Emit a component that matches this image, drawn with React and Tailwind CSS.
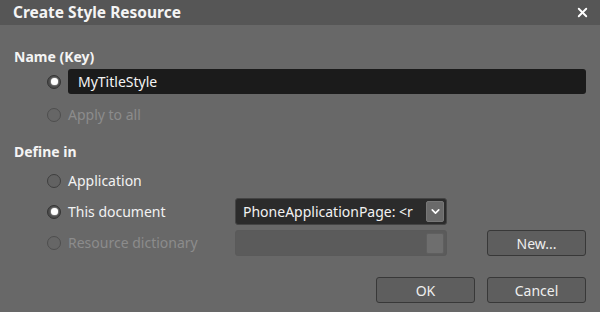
import { ChevronDown, X } from 'lucide-react'

const font = { fontFamily: '"Noto Sans", "Open Sans", sans-serif' }

function Radio({ checked, disabled }) {
  return (
    <span
      className={`flex h-[14px] w-[14px] shrink-0 items-center justify-center rounded-full border ${
        disabled ? 'border-[#4e4e4e] bg-[#666666]' : checked ? 'border-[#353535] bg-[#4a4a4a]' : 'border-[#3f3f3f] bg-[#626262]'
      }`}
    >
      {checked && <span className="h-[7px] w-[7px] rounded-full bg-white shadow-[0_0_2px_#fff]" />}
    </span>
  )
}

function Option({ label, checked, disabled, className = '' }) {
  return (
    <div className={`flex items-center gap-[7px] pl-[33px] ${className}`}>
      <Radio checked={checked} disabled={disabled} />
      <span className={`text-[14px] leading-[18px] ${disabled ? 'text-[#8c8c8c]' : 'text-[#f2f2f2]'}`}>{label}</span>
    </div>
  )
}

function Button({ children }) {
  return (
    <button className="flex h-[26px] w-[99px] items-center justify-center rounded-[3px] border border-[#383838] bg-[#5e5e5e] text-[14px] text-[#eeeeee]">
      {children}
    </button>
  )
}

export default function App() {
  return (
    <div className="h-[312px] w-[600px] overflow-hidden bg-[#686868]" style={font}>
      {/* Title bar */}
      <div className="flex h-[25px] items-center justify-between bg-[#565656] pl-[13px] pr-[10px]">
        <span className="text-[15.5px] font-bold text-[#f4f4f4]">Create Style Resource</span>
        <X size={15} strokeWidth={3} className="text-white" />
      </div>

      <div className="px-[14px]">
        <div className="pt-[23px] text-[14px] font-bold text-[#f4f4f4] leading-[18px]">Name (Key)</div>

        <div className="mt-[3px] flex items-center gap-[7px] pl-[33px]">
          <Radio checked />
          <div className="flex h-[25px] flex-1 items-center rounded-[3px] bg-[#1b1b1b] pl-[10px] text-[14px] text-[#f4f4f4]">
            MyTitleStyle
          </div>
        </div>

        <Option label="Apply to all" disabled className="mt-[12px]" />

        <div className="mt-[19px] text-[14px] font-bold text-[#f4f4f4] leading-[18px]">Define in</div>

        <Option label="Application" className="mt-[11px]" />

        <div className="mt-[8px] flex items-center">
          <Option label="This document" checked className="w-[221px]" />
          <div className="flex h-[27px] w-[212px] items-center justify-between rounded-[3px] border border-[#444] bg-[#2b2b2b] pl-[7px] pr-[2px]">
            <span className="w-[182px] overflow-hidden whitespace-nowrap text-[14px] text-[#f2f2f2]">PhoneApplicationPage: &lt;r</span>
            <span className="flex h-[21px] w-[18px] items-center justify-center rounded-[2px] border border-[#777] bg-[#6a6a6a]">
              <ChevronDown size={13} strokeWidth={3} className="text-white" />
            </span>
          </div>
        </div>

        <div className="mt-[5px] flex items-center">
          <Option label="Resource dictionary" disabled className="w-[221px]" />
          <div className="flex h-[26px] w-[212px] items-center justify-end rounded-[3px] border border-[#5a5a5a] bg-[#5b5b5b] pr-[2px]">
            <span className="h-[21px] w-[18px] rounded-[2px] border border-[#5f5f5f] bg-[#6e6e6e]" />
          </div>
          <div className="ml-[40px]">
            <Button>New...</Button>
          </div>
        </div>

        <div className="mt-[21px] flex justify-end gap-[12px]">
          <Button>OK</Button>
          <Button>Cancel</Button>
        </div>
      </div>
    </div>
  )
}
